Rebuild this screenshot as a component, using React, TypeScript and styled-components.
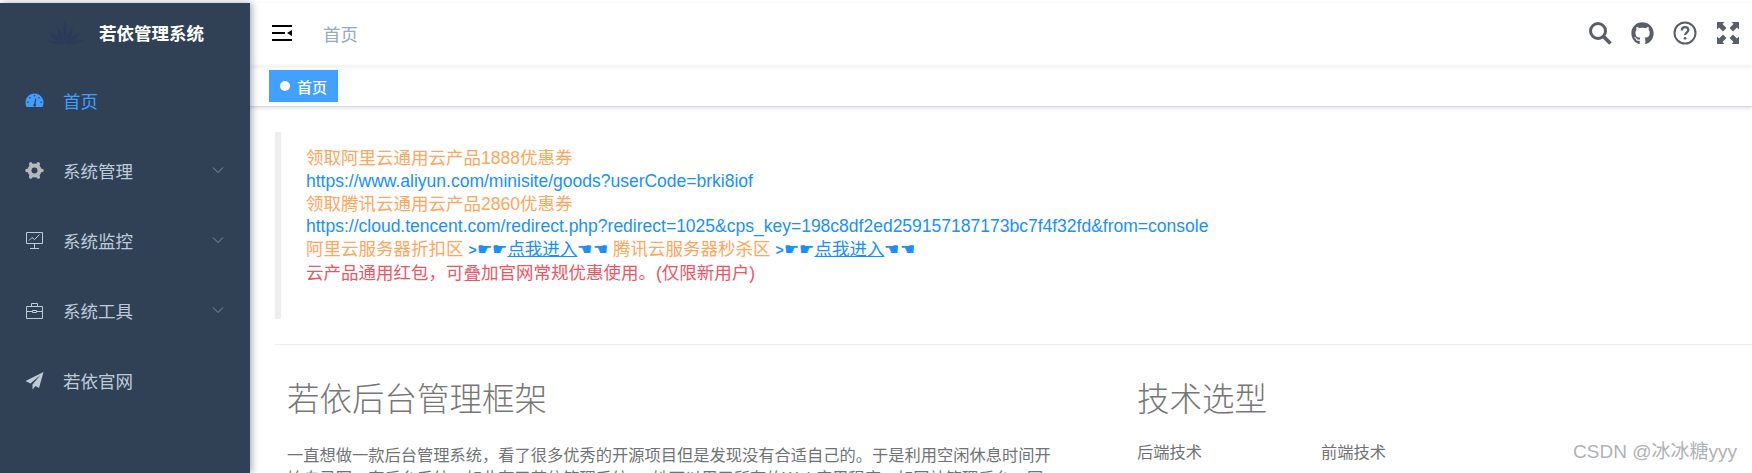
import React from 'react';
import styled, { createGlobalStyle } from 'styled-components';
import { FaGithub } from 'react-icons/fa';

const Global = createGlobalStyle`
  html, body { margin: 0; padding: 0; background: #fff; overflow: hidden; }
  body { font-family: "Liberation Sans", "Noto Sans CJK SC", sans-serif; }
  * { box-sizing: border-box; }
`;

const Page = styled.div`
  display: flex;
  width: 1752px;
  height: 473px;
  padding-top: 3px;
  overflow: hidden;
`;

const Sidebar = styled.aside`
  position: relative;
  z-index: 2;
  flex: 0 0 250px;
  background: #304156;
  box-shadow: 2px 0 7px rgba(0, 21, 41, 0.35);
`;

const Brand = styled.div`
  display: flex;
  align-items: center;
  height: 62px;
  padding-left: 46px;
  padding-bottom: 3px;
  gap: 15px;
  color: #fff;
  font-size: 17.5px;
  font-weight: 700;
`;

const Item = styled.div<{ $active?: boolean }>`
  display: flex;
  align-items: center;
  height: 70px;
  padding-left: 25px;
  padding-right: 26px;
  font-size: 17.5px;
  color: ${(p) => (p.$active ? '#409eff' : '#bfcbd9')};
`;

const ItemIcon = styled.svg`
  width: 19px;
  height: 19px;
  margin-right: 19px;
  flex: none;
`;

const ItemLabel = styled.span`
  flex: 1;
`;

const Chevron = styled.svg`
  width: 12px;
  height: 8px;
  flex: none;
  color: #8593a5;
`;

const Main = styled.main`
  flex: 1;
  min-width: 0;
  display: flex;
  flex-direction: column;
`;

const Navbar = styled.header`
  display: flex;
  align-items: center;
  height: 63px;
  padding: 0 12px 3px 22px;
  background: #fff;
  box-shadow: 0 1px 4px rgba(0, 21, 41, 0.08);
`;

const Hamburger = styled.svg`
  width: 20px;
  height: 18px;
  margin-right: 31px;
`;

const Crumb = styled.span`
  flex: 1;
  font-size: 17.5px;
  color: #97a8be;
`;

const Tools = styled.div`
  display: flex;
  align-items: center;
  gap: 19px;
  color: #5a5e66;
`;

const Tool = styled.svg`
  width: 24px;
  height: 24px;
  flex: none;
  display: block;
`;

const GitIcon = styled(FaGithub)`
  width: 23px;
  height: 23px;
  flex: none;
  display: block;
`;

const TagBar = styled.div`
  display: flex;
  align-items: center;
  height: 41px;
  padding-left: 19px;
  border-bottom: 1px solid #d8dce5;
  box-shadow: 0 1px 4px rgba(0, 21, 41, 0.14);
`;

const Tag = styled.div`
  display: flex;
  align-items: center;
  gap: 7px;
  width: 69px;
  height: 32px;
  padding-left: 11px;
  background: #42a0ff;
  color: #fff;
  font-size: 15px;
  font-weight: 500;

  &::before {
    content: '';
    width: 10px;
    height: 10px;
    border-radius: 50%;
    background: #fff;
  }
`;

const Content = styled.div`
  flex: 1;
  padding: 25px 0 0 25px;
  min-height: 0;
  overflow: hidden;
  position: relative;
`;

const Quote = styled.blockquote`
  margin: 0;
  height: 187px;
  border-left: 6px solid #eee;
  padding: 15px 0 0 25px;
  font-size: 17.5px;
  line-height: 22.8px;
`;

const Line = styled.div<{ $color?: string }>`
  color: ${(p) => p.$color ?? '#ffa65c'};
  white-space: nowrap;
`;

const PromoLink = styled.span`
  color: #1890ff;
`;

const Arrow = styled.span`
  font-size: 14px;
  font-weight: 700;
`;

const Hands = styled.span`
  font-size: 17px;
  letter-spacing: 0.4px;
`;

const LinkWords = styled.span`
  text-decoration: underline;
  text-decoration-thickness: 1px;
`;

const Rule = styled.hr`
  border: 0;
  border-top: 1px solid #eee;
  margin: 25px 0 0;
`;

const Columns = styled.div`
  display: grid;
  grid-template-columns: 850px 1fr;
  padding-left: 12px;
`;

const Title = styled.h2`
  margin: 34px 0 0;
  font-size: 32.5px;
  line-height: 43px;
  font-weight: 300;
  color: #777;
`;

const Para = styled.p`
  margin: 22px 0 0;
  width: 770px;
  font-size: 16.25px;
  line-height: 22.5px;
  color: #707376;
`;

const StackRow = styled.div`
  display: grid;
  grid-template-columns: 184px 184px;
  margin-top: 19px;
  font-size: 16.25px;
  line-height: 22px;
  color: #707376;
`;

const Watermark = styled.div`
  position: absolute;
  right: 15px;
  bottom: 8px;
  font-size: 19px;
  line-height: 26px;
  color: #b0b3b6;
  text-shadow: 0 0 1px #fff;
`;

const ChevronDown = () => (
  <Chevron viewBox="0 0 12 8" fill="none" stroke="currentColor" strokeWidth="1">
    <path d="M1 1.500 6 6.500 11 1.500" />
  </Chevron>
);

const PromoHands = ({ left }: { left: boolean }) => <Hands>{left ? '☛☛' : '☚☚'}</Hands>;

const Promo = () => (
  <PromoLink>
    <Arrow>&gt;</Arrow>
    <PromoHands left />
    <LinkWords>点我进入</LinkWords>
    <PromoHands left={false} />
  </PromoLink>
);

const App = () => (
  <Page>
    <Global />
    <Sidebar>
      <Brand>
        <svg width="38" height="24" viewBox="0 0 38 24" fill="#2b3a5a">
          <path d="M19 0c2.500 6 2.500 14 0 23-2.500-9-2.500-17 0-23z" />
          <path d="M11 5c4 5 6.500 11 7 18-4-4-7-11-7-18z" />
          <path d="M27 5c-4 5-6.500 11-7 18 4-4 7-11 7-18z" />
          <path d="M3 11c6 2 11 6 15 12-6-1-12-6-15-12z" />
          <path d="M35 11c-6 2-11 6-15 12 6-1 12-6 15-12z" />
          <path d="M0 19c6 0 12 2 18 4.500-6 .5-13-1-18-4.500z" />
          <path d="M38 19c-6 0-12 2-18 4.500 6 .5 13-1 18-4.500z" />
        </svg>
        若依管理系统
      </Brand>
      <Item $active>
        <ItemIcon viewBox="0 0 19 19" fill="currentColor">
          <path
            fillRule="evenodd"
            d="M9.500 2.500C4.500 2.500.5 6.500.5 11.500c0 1.500.3 3 1 4.500h16c.7-1.500 1-3 1-4.500 0-5-4-9-9-9zM9.500 4a.8.8 0 1 1 0 1.600.8.800 0 0 1 0-1.600zM5 6a.8.8 0 1 1 0 1.600A.8.8 0 0 1 5 6zm9 0a.8.8 0 1 1 0 1.600A.8.800 0 0 1 14 6zM3 10.500a.8.8 0 1 1 0 1.600.8.800 0 0 1 0-1.600zm13 0a.8.8 0 1 1 0 1.600.8.800 0 0 1 0-1.600zM10.300 7.500h1l-.7 5.600a1.400 1.400 0 1 1-1.500-.2z"
          />
        </ItemIcon>
        <ItemLabel>首页</ItemLabel>
      </Item>
      <Item>
        <ItemIcon viewBox="0 0 19 19" fill="none" stroke="#b5b9bf">
          <circle cx="9.500" cy="9.500" r="5" strokeWidth="4" />
          <path
            d="M2 9.500h1M16 9.500h1M5.700 3l.5.900M13.300 3l-.5.900M5.700 16l.5-.9M13.300 16l-.5-.9"
            strokeWidth="3.600"
            strokeLinecap="round"
          />
        </ItemIcon>
        <ItemLabel>系统管理</ItemLabel>
        <ChevronDown />
      </Item>
      <Item>
        <ItemIcon viewBox="0 0 19 19" fill="none" stroke="currentColor" strokeWidth="1">
          <path d="M1.500 1.500h16v11h-16zM9.500 12.500v5M5 17.500h9M4 9.500l3-3 2.500 2 5-5" />
        </ItemIcon>
        <ItemLabel>系统监控</ItemLabel>
        <ChevronDown />
      </Item>
      <Item>
        <ItemIcon viewBox="0 0 19 19" fill="none" stroke="currentColor" strokeWidth="1">
          <path d="M1.500 5.500h16v12h-16zM6.500 5.500v-3h6v3M1.500 10.500h6M11.500 10.500h6M7.500 9.500h4v2h-4z" />
        </ItemIcon>
        <ItemLabel>系统工具</ItemLabel>
        <ChevronDown />
      </Item>
      <Item>
        <ItemIcon viewBox="0 0 19 19" fill="currentColor">
          <path d="M18.500 1 .5 10l5 2.500L15.500 4 7.500 13.500v5l3-3.500 3.500 2z" />
        </ItemIcon>
        <ItemLabel>若依官网</ItemLabel>
      </Item>
    </Sidebar>
    <Main>
      <Navbar>
        <Hamburger viewBox="0 0 20 18">
          <path d="M0 1h20v2H0zM0 8h13v2H0zM0 15h20v2H0zM20 6v6l-5-3z" fill="#000" />
        </Hamburger>
        <Crumb>首页</Crumb>
        <Tools>
          <Tool viewBox="0 0 24 24" fill="none" stroke="currentColor">
            <circle cx="10" cy="10" r="7.500" strokeWidth="3" />
            <path d="M15.500 15.500 22.500 22.500" strokeWidth="3.800" />
          </Tool>
          <GitIcon />
          <Tool viewBox="0 0 24 24" fill="none" stroke="currentColor">
            <circle cx="12" cy="12" r="10.500" strokeWidth="2" />
            <path d="M8.800 9.500c0-2 1.400-3.300 3.300-3.300s3.200 1.200 3.200 2.900c0 2.400-3.200 2.600-3.200 5" strokeWidth="2.200" />
            <circle cx="12.100" cy="17.300" r="1.400" fill="currentColor" stroke="none" />
          </Tool>
          <Tool viewBox="0 0 24 24" fill="currentColor">
            <path d="M1 1h7.500L6.500 3l4 4L7 10.500l-4-4-2 2zM23 1h-7.500l2 2-4 4L17 10.500l4-4 2 2zM1 23h7.500l-2-2 4-4L7 13.500l-4 4-2-2zM23 23h-7.500l2-2-4-4 3.500-3.500 4 4 2-2z" />
          </Tool>
        </Tools>
      </Navbar>
      <TagBar>
        <Tag>首页</Tag>
      </TagBar>
      <Content>
        <Quote>
          <Line>领取阿里云通用云产品1888优惠券</Line>
          <Line $color="#1890ff">https://www.aliyun.com/minisite/goods?userCode=brki8iof</Line>
          <Line>领取腾讯云通用云产品2860优惠券</Line>
          <Line $color="#1890ff">https://cloud.tencent.com/redirect.php?redirect=1025&amp;cps_key=198c8df2ed259157187173bc7f4f32fd&amp;from=console</Line>
          <Line>
            阿里云服务器折扣区 <Promo /> 腾讯云服务器秒杀区 <Promo />
          </Line>
          <Line $color="#ed5565">云产品通用红包，可叠加官网常规优惠使用。(仅限新用户)</Line>
        </Quote>
        <Rule />
        <Columns>
          <div>
            <Title>若依后台管理框架</Title>
            <Para>
              一直想做一款后台管理系统，看了很多优秀的开源项目但是发现没有合适自己的。于是利用空闲休息时间开始自己写一套后台系统，如此有了若依管理系统。，她可以用于所有的Web应用程序，如网站管理后台，网站会员中心。
            </Para>
          </div>
          <div>
            <Title>技术选型</Title>
            <StackRow>
              <span>后端技术</span>
              <span>前端技术</span>
            </StackRow>
          </div>
        </Columns>
        <Watermark>CSDN @冰冰糖yyy</Watermark>
      </Content>
    </Main>
  </Page>
);

export default App;
